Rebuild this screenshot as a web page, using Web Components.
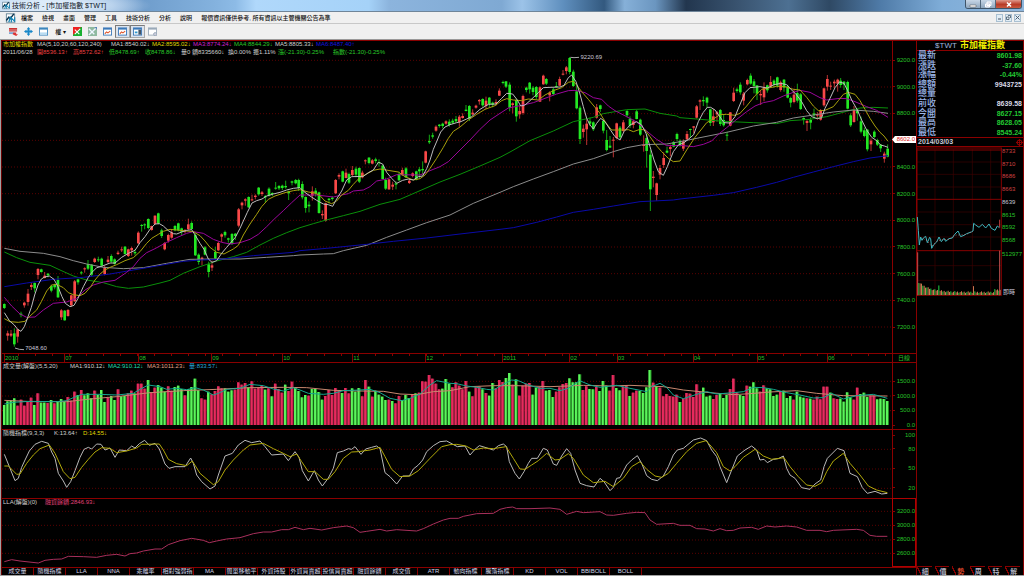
<!DOCTYPE html>
<html lang="zh-Hant">
<head>
<meta charset="utf-8">
<title>技術分析 - [市加權指數 $TWT]</title>
<style>
  html, body { margin: 0; background: #000; }
  body { font-family: "Liberation Sans", "Noto Sans CJK TC", sans-serif; }
</style>
</head>
<body>
<trading-app></trading-app>
<script>
const define = (name, css, html, setup) => {
  customElements.define(name, class extends HTMLElement {
    connectedCallback() {
      if (this.shadowRoot) return;
      const root = this.attachShadow({ mode: "open" });
      const body = typeof html === "function" ? html(this) : html;
      root.innerHTML = `<style>*{box-sizing:border-box}${css}</style>${body}`;
      if (setup) setup(this, root);
    }
  });
};

/* ---------- drawing data: each block is [x0, y0, values] in a space of 3 units per pixel ---------- */

const CANDLES = [
 [0, 570, `13 340 342 354 357 g,23 422 430 437 452 r,33 420 431 437 441 r,43 415 430 463 470 g,53 418 418 440 458 r,63 365 371 375 382 g,73 335 338 346 353 r,84 297 311 336 347 r,94 278 285 291 300 r,104 277 279 295 307 g,114 234 237 255 268 r,124 236 238 246 248 g,134 246 257 264 265 r,144 249 251 256 262 g,154 284 288 302 307 g,164 281 284 292 298 g,174 258 270 322 324 g,184 357 361 382 390 r,194 360 362 391 392 g,204 357 360 378 380 r,214 314 316 346 350 r,224 270 274 334 335 r,234 266 268 277 284 g,244 243 247 250 254 g,254 232 235 238 248 r,264 210 222 236 240 g,275 222 224 254 258 g,284 203 206 216 219 r,295 200 208 211 216 g,305 203 206 227 230 g,314 227 232 252 256 r,324 198 209 216 220 r,334 193 198 215 218 g,344 205 208 222 224 g,354 182 188 192 195 r,365 170 178 181 186 r,375 168 170 192 194 g,385 176 178 198 201 r,395 170 174 181 197 r,405 178 186 190 196 g,415 124 128 160 162 r,425 102 105 108 125 g,434 100 103 106 118 g,445 85 87 114 118 g,455 107 108 120 122 r,465 76 77 102 104 r,475 68 70 101 103 g,485 116 121 138 144 g,494 156 159 178 181 r,505 131 135 152 158 r,515 118 127 143 146 r,525 105 108 121 124 g,535 98 100 121 124 g,545 113 115 126 136 g,555 117 121 125 130 r,565 86 103 117 120 r,575 94 99 117 119 g,586 130 135 196 198 g,596 190 194 216 224 g,606 200 203 210 226 r,615 168 172 194 196 g,626 215 223 246 262 g,636 212 226 233 243 r,646 170 186 205 207 g,655 155 159 181 183 r,665 130 133 140 156 r,675 122 126 136 143 g,685 143 145 149 158 g,696 129 132 160 165 g,706 129 131 138 150 g`],
 [600, 360, `116 264 268 317 322 r,126 245 248 256 268 r,136 235 238 242 257 r,146 229 231 262 264 g,156 224 238 241 244 r,166 223 227 231 238 r,176 201 203 223 227 g,186 213 217 222 228 r,196 225 228 232 248 g,207 202 206 227 230 g,217 217 219 222 228 g,227 186 203 206 209 g,237 195 198 205 210 g,247 194 197 204 210 g,257 182 198 202 206 g,266 212 214 220 240 g,276 182 184 188 196 g,287 177 180 190 193 g,296 176 180 204 213 g,307 184 192 232 238 g,317 229 231 264 278 g,327 244 254 259 277 g,337 199 214 227 242 r,347 204 212 221 230 g,357 215 217 279 281 g,367 271 282 286 297 r,377 248 250 302 305 r,387 234 236 240 250 g,397 229 233 237 242 g,407 177 180 220 222 r,417 160 165 170 178 r,428 152 154 185 187 g,438 146 158 174 175 r,447 158 162 188 192 g,457 138 150 165 168 r,468 140 146 164 172 g,478 142 144 185 189 g,487 152 158 172 175 r,496 118 121 124 133 r,507 111 113 129 133 g,517 117 121 131 133 r,527 113 118 123 130 g,537 118 126 129 140 g,548 135 137 177 178 g,557 173 180 206 210 g,567 176 178 208 210 r,578 185 194 200 210 r,588 184 190 194 208 g,597 155 162 181 183 g,607 143 150 165 168 r,618 141 145 172 174 g,628 176 182 189 192 r,638 157 160 168 172 r,649 152 154 179 181 g,658 141 148 154 175 g,668 124 147 151 164 g,677 92 94 128 130 r,688 44 63 67 72 g,698 38 46 50 56 g,708 16 20 32 35 r,718 12 14 18 23 g,728 8 11 18 25 g,738 1 4 11 14 r,748 -2 5 15 20 g,758 -4 2 8 12 g,768 -12 -3 4 8 g,778 -15 -10 6 20 r`],
 [1380, 150, `8 190 198 204 206 r,18 165 179 183 184 g,28 165 168 206 213 g,38 178 188 193 195 r,48 164 167 173 176 r,58 147 150 154 164 r,68 145 147 166 170 g,78 140 152 168 177 r,88 141 143 162 172 g,98 155 158 164 172 g,108 148 156 160 167 r,118 115 122 137 138 r,129 92 96 99 103 g,138 93 94 110 114 g,149 97 104 173 184 g,158 157 160 165 190 r,169 146 150 199 215 g,179 168 183 193 206 r,189 134 138 189 194 r,199 110 113 120 127 g,209 96 98 118 131 g,219 108 113 126 136 g,229 108 111 141 147 g,240 109 112 155 156 r,250 74 77 103 104 r,259 84 87 101 105 g,269 124 128 136 154 r,280 113 118 132 136 g,289 96 108 111 113 g,299 80 87 107 108 r,309 60 71 74 76 r,319 48 52 63 73 r,329 21 24 66 73 g,340 59 65 108 111 g,350 106 124 175 178 g,360 167 173 267 282 g,370 224 236 246 263 r,380 208 221 238 285 r,390 203 214 221 228 g,400 214 217 238 243 g,410 162 172 203 206 r,421 164 166 177 186 g,430 208 213 242 250 g,440 240 270 300 304 g,450 258 287 293 294 g,460 261 269 272 322 r,470 218 220 264 268 r,480 228 233 262 267 g,490 210 217 243 247 r,501 180 183 196 202 g,510 199 206 227 234 g,520 209 214 225 235 r,530 180 184 207 208 g,541 206 209 254 258 g,551 256 285 288 305 r,560 253 264 303 353 g,571 300 314 418 483 g,580 363 380 384 412 r,590 398 400 435 452 r,600 345 354 374 388 r,611 307 324 345 354 r,621 290 302 308 310 g,631 284 291 297 319 r,641 273 276 290 292 g,651 248 252 267 273 g`],
 [2040, 150, `0 268 272 286 290 g,10 268 274 296 303 r,21 243 252 268 270 r,31 236 237 240 264 g,41 228 229 233 250 r,50 165 169 203 206 r,60 148 151 155 180 r,70 139 150 154 168 g,81 140 143 158 174 g,91 176 178 219 228 g,100 177 199 217 228 r,111 183 187 193 215 r,121 177 180 222 228 g,131 194 210 226 230 g,141 245 254 257 273 g,151 186 187 227 229 r,161 113 128 153 156 r,171 113 118 123 128 g,181 97 104 127 134 g,191 126 131 152 166 r,202 86 90 103 106 r,212 70 77 101 104 g,222 87 94 108 130 g,231 105 106 131 150 g,242 120 132 136 165 r,252 97 112 142 154 r,262 104 106 121 128 g,272 78 96 110 112 r,282 88 92 104 113 g,292 80 82 107 113 g,302 92 97 120 125 r,312 87 89 113 125 g,323 104 109 143 145 g,332 140 144 158 172 g,342 116 134 156 160 r,352 101 129 152 158 g,362 129 133 177 180 g,371 202 204 210 224 g,381 207 213 219 243 r,392 202 210 218 238 g,402 176 190 196 205 g,412 186 193 197 209 r,422 177 180 209 212 r,432 113 115 166 170 r,442 75 87 110 122 r,452 95 107 110 120 r,463 89 95 100 114 r,473 86 89 101 125 r,482 84 92 105 113 g,492 93 95 104 120 g,503 92 96 176 178 g,512 190 196 226 231 g,522 168 180 216 218 r,532 176 179 190 212 g,543 200 214 245 250 g,553 233 241 258 262 g,562 237 239 298 304 g,573 265 272 283 303 r,583 241 245 261 264 g,592 266 270 284 288 g,602 282 284 295 306 g,613 305 311 326 338 r,623 283 296 320 322 g`]
];

const PRICE_LINES = [
 ["#0a8f0a", [[0,570,"13,186 50,203 90,217 150,226 180,240 220,258 260,270 310,278 350,290 385,295 430,291 480,279 510,271 550,250 600,230 650,213 700,200 740,187 780,165 820,145 860,128 900,113"],[600,360,"340,311 375,301 430,287 480,274 540,253 600,238 660,212 720,186 780,163 840,138 900,112"],[1380,150,"150,306 210,272 280,243 340,215 400,202 430,191 500,179 555,177 600,190 650,198"],[2040,150,"0,203 50,207 130,214 220,218 290,221 330,212 390,208 440,200 500,184 540,174 580,172 624,174"]]],
 ["#8c8c8c", [[0,570,"13,175 60,184 130,190 180,200 220,212 260,222 310,232 370,236 430,233 500,220 570,208 640,207 720,207 800,202 880,197"],[600,360,"300,405 370,402 400,401 430,392 500,376 560,352 620,330 680,308 750,285 820,250 900,217"],[1380,150,"160,410 220,387 280,365 340,342 400,326 460,305 500,293 550,284 620,282"],[2040,150,"0,275 60,263 140,247 220,228 290,217 340,204 400,195 460,186 520,180 580,184 624,190"]]],
 ["#0a0aa8", [[0,570,"13,290 80,279 160,268 250,262 330,252 400,240 470,228 550,214 600,210 660,208 760,197 880,187"],[600,360,"300,392 380,385 500,373 580,364 680,354 780,342 900,328"],[1380,150,"160,533 230,517 290,501 340,487 400,478 460,468 540,455 640,450"],[2040,150,"0,447 100,436 160,428 230,412 290,397 340,382 400,366 460,350 520,335 570,324 624,317"]]],
 ["#9a069a", [[0,570,"13,322 35,348 60,372 80,382 105,381 130,360 160,340 200,336 230,325 255,300 280,285 310,276 345,271 380,247 400,230 420,205 440,188 465,176 500,157 530,143 560,130 580,125 610,130 640,148 665,157 690,162 720,158 750,148 775,133 800,110 825,85 850,62 875,38 900,15"],[600,360,"320,225 350,225 400,231 425,225 445,221 460,213 490,210 510,200 530,183 560,177 590,164 660,165 690,152 720,140 745,125"],[1380,150,"0,300 30,270 60,238 90,210 120,190 145,174 185,166 220,158 255,145 290,132 325,122 345,121 375,128 400,143 425,148 445,168 465,182 500,200 530,216 560,243 590,268 620,287"],[2040,150,"0,286 40,290 70,283 95,273 115,253 140,233 165,212 200,185 225,168 250,158 280,152 310,138 340,127 360,121 390,127 420,143 440,150 480,145 500,146 525,155 560,170 590,181 605,190 624,202"]]],
 ["#a8a00c", [[0,570,"13,386 30,395 55,397 75,394 90,378 110,360 124,335 140,303 155,285 170,283 190,293 205,308 220,314 240,317 255,310 272,290 285,270 300,252 315,240 330,232 350,224 375,212 400,203 420,185 440,160 455,145 475,133 490,124 510,118 530,120 560,123 580,125 600,137 615,153 630,172 650,187 672,192"],[600,360,"100,387 115,376 130,345 150,312 170,283 185,260 205,238 225,228 255,218 280,212 300,209 325,216 345,219 360,227 375,243 395,251 410,243 425,225 445,211 460,193 480,172 500,162 520,151 540,147 570,152 595,156 615,170 640,180 660,176 675,165 690,145 710,115 730,82 745,55 760,34"],[1380,150,"0,231 25,210 50,193 75,178 105,167 125,152 140,146 160,150 185,152 205,147 235,150 255,135 280,122 305,113 325,97 340,94 350,105 365,125 385,148 405,172 420,190 440,222 455,240 490,240 505,239 520,245 540,238 555,240 570,260 585,282 605,305 625,325 640,335"],[2040,150,"0,333 20,300 45,262 65,237 80,218 100,207 120,194 140,193 165,196 180,190 200,168 225,137 245,118 265,114 290,109 315,110 340,118 360,120 380,142 400,168 415,182 435,181 460,170 475,152 490,133 505,127 525,133 540,152 555,178 570,205 585,228 600,247 612,258 624,274"]]],
 ["#bdbdbd", [[0,570,"13,368 28,392 43,405 53,418 63,424 73,410 84,380 94,352 104,315 114,285 124,267 134,261 148,258 162,268 174,290 186,320 196,340 210,350 222,346 234,325 250,290 265,262 275,248 290,233 305,229 330,219 345,219 365,202 385,190 405,181 420,158 435,140 450,118 465,102 478,101 490,108 505,122 520,131 530,132 545,126 560,121 575,119 586,136 600,160 612,178 625,207 636,217 650,212 665,190 680,172"],[600,360,"106,352 120,325 130,303 142,277 156,249 170,242 186,237 200,228 220,222 240,217 260,210 280,205 300,203 312,215 330,228 350,241 370,252 385,254 398,259 408,240 425,213 440,180 455,170 490,169 505,158 520,150 535,127 548,132 560,157 575,175 590,190 608,181 625,177 640,180 655,170 668,168 680,146 690,120 700,88 712,60 722,36 735,21 750,14 770,8"],[1380,150,"0,216 20,207 35,200 60,178 85,163 108,162 125,145 140,130 158,132 172,150 182,168 195,165 210,152 235,128 250,113 270,112 300,111 312,106 325,83 335,75 348,95 358,125 370,170 380,205 390,225 400,237 410,220 422,205 435,215 450,238 465,260 480,270 492,245 510,225 530,215 545,225 558,250 570,290 582,330 595,365 610,376 622,350 640,305 655,285"],[2040,150,"12,278 25,268 41,254 55,215 70,187 82,172 92,172 105,180 118,198 132,218 150,219 165,200 178,168 195,128 210,113 240,110 262,114 282,104 302,100 320,104 335,120 350,135 365,155 380,182 395,200 412,206 425,203 435,175 450,145 465,113 478,96 492,100 503,122 515,150 532,180 545,210 560,240 575,262 590,272 602,285 613,288 624,292"]]]
];

const VOLUME = "g165 g154 g151 g145 r167 r149 r167 r153 r143 g165 r130 g158 g158 r159 g150 r160 g153 g147 g155 r141 r152 r125 g135 r120 g136 g130 g145 r122 g135 g120 g156 r144 g138 g150 r118 g139 g138 r130 r122 g130 r101 r101 r116 g90 r126 r113 g105 g113 g125 r109 r122 g111 g107 g117 r136 g117 g111 g86 g121 r145 r149 g125 r133 r123 r109 r115 g115 g125 g121 r119 r97 r104 r99 g112 r94 r116 r113 r107 g119 r115 g139 r101 r117 r128 g104 r123 r95 g113 g123 g142 g135 r137 g117 g117 g126 g149 r138 r120 r135 r114 r122 g129 r114 r130 g115 g125 g114 r139 r90 g110 r140 g122 g134 g140 g150 r149 g153 r160 r138 g150 g135 g144 r133 g130 r128 r94 r95 r75 r86 r101 r118 g116 g87 g101 r112 r97 r107 r118 r93 g125 r139 r112 r110 g118 r129 g137 g99 r115 r90 r96 g84 g69 r104 g88 r137 r107 r101 r99 g134 g113 r111 r93 g122 g120 g141 r125 r112 r102 r99 g85 g97 g97 g73 r120 r109 g117 g118 r111 g123 g93 g107 r122 r75 g114 g121 r110 r105 g138 r128 r122 g123 g129 g112 g60 r98 g108 r113 r139 r132 r138 r140 r134 g156 r146 r129 r131 r141 r103 r125 g113 g140 g137 r147 r135 g131 g144 g135 r117 r86 r127 g135 g138 r107 g110 g97 g115 r125 r106 g115 g118 g138 g134 r126 g122 g144 g138 r149 g125 g140 g143 r145 g146 r149 r140 r148 r110 r110 g128 r145 r147 g146 g155 g127 g142 r149 r113 g132 g128 g141 r137 r137 g148 g146 g147 g153";

const VOLUME_LINES = [
 ["#c98870", [[0,1050,"13,151 100,155 200,155 280,146 350,140 450,128 550,122 650,118 750,113 850,112 920,113 1000,121 1080,123 1150,124 1200,132 1250,134 1300,125"],[1350,1050,"0,122 60,110 130,107 200,107 300,110 400,106 480,108 540,106 640,110 700,120 780,128 850,134 900,131 960,126 1040,122 1100,130 1180,137 1312,138"]]],
 ["#14a890", [[0,1050,"13,162 40,157 90,154 170,155 200,152 220,143 245,133 300,133 350,135 400,130 420,118 445,105 480,110 500,118 530,115 560,119 586,113 610,120 640,135 655,130 680,118 720,115 750,103 790,107 820,117 850,123 880,113 900,120 925,130 970,133 1000,130 1030,122 1080,120 1110,118 1140,128 1170,145 1205,152 1230,145 1260,132 1290,105 1310,92 1350,100"],[1350,1050,"20,101 50,108 80,112 110,118 130,120 160,103 185,90 205,92 235,105 270,115 300,115 330,122 355,115 389,92 420,105 450,112 500,106 540,115 590,125 605,110 630,100 650,112 670,135 700,146 740,133 770,125 800,132 850,128 880,125 910,112 940,113 970,118 1010,128 1050,135 1090,144 1120,143 1145,130 1180,147 1220,137 1270,133 1312,145"]]]
];

const KD_LINES = [
 ["#b8b8b8", [[0,1050,"13,313 28,350 45,392 55,385 65,352 75,330 88,303 105,283 125,274 145,280 155,306 165,325 175,370 190,393 200,412 212,395 225,362 240,322 252,298 265,292 275,297 290,282 303,283 315,300 330,294 345,322 358,300 380,302 395,288 405,294 418,281 434,271 448,286 465,280 478,297 495,342 507,355 525,350 555,350 572,324 580,340 590,375 605,395 630,417 645,408 655,375 675,318 697,310 715,285 735,271 755,278 780,273 795,290 815,315 850,312 865,332 885,305 897,322 907,362 925,393 943,362 955,390 967,408 985,384 1000,355 1012,308 1030,303 1045,296 1055,298 1065,290 1083,313 1097,297 1115,292 1130,288 1140,296 1155,368 1170,380 1190,402 1208,378 1228,378 1240,357 1255,345 1268,330 1280,305 1300,287 1320,275 1340,273"],[1350,1050,"22,290 45,288 60,315 75,298 88,287 105,292 130,300 145,287 160,282 170,290 178,335 195,370 208,387 222,365 235,340 245,325 262,325 280,295 292,300 310,342 320,346 335,318 350,296 362,310 375,360 390,400 410,407 432,411 450,385 462,395 480,422 490,412 500,385 510,383 530,345 545,330 562,317 575,340 590,377 605,388 622,392 640,378 655,350 670,315 682,300 700,295 730,270 752,264 770,272 785,300 800,320 810,350 830,398 845,360 862,318 885,300 905,288 920,300 930,330 942,328 952,338 970,328 985,326 1000,318 1010,355 1020,375 1035,385 1055,413 1080,418 1095,402 1112,390 1122,350 1132,325 1145,312 1162,295 1182,302 1200,370 1222,380 1237,413 1252,430 1275,424 1295,432 1312,430"]]],
 ["#b0a80a", [[0,1050,"13,348 25,348 50,373 60,372 80,340 100,315 120,296 148,285 165,310 190,365 210,386 225,382 245,352 265,328 285,306 305,293 330,295 350,308 380,303 410,294 425,283 478,282 490,300 505,328 530,341 560,347 577,333 600,370 640,404 655,395 675,360 700,330 730,300 750,285 790,280 820,296 850,310 870,320 890,312 905,335 925,365 945,365 970,388 985,388 1005,365 1030,325 1055,306 1075,305 1110,300 1140,292 1155,320 1175,358 1200,380 1230,378 1255,362 1290,325 1325,290 1350,284"],[1350,1050,"20,283 48,288 70,300 100,294 130,296 168,290 190,325 210,357 225,358 245,345 265,332 290,310 315,330 330,328 355,311 370,325 400,375 430,398 465,394 490,410 520,385 545,350 570,335 590,358 615,378 635,382 655,370 680,340 710,305 740,280 768,272 780,285 800,308 820,350 840,363 855,350 880,322 915,298 940,318 965,328 1002,323 1020,350 1045,380 1070,405 1095,409 1115,398 1130,365 1150,333 1180,310 1200,340 1230,375 1255,408 1280,420 1312,428"]]]
];

const MARGIN_LINES = [
 ["#a8305c", [[0,1050,"13,635 35,629 60,633 115,639 135,631 160,628 185,627 205,619 250,620 290,622 320,616 350,613 375,618 390,611 410,609 430,603 465,597 485,597 505,584 540,572 575,565 610,571 628,578 650,573 680,567 720,563 760,551 790,546 815,546 845,539 865,539 885,532 910,539 930,535 965,540 1000,533 1040,528 1060,533 1080,547 1100,544 1140,538 1160,543 1190,539 1250,543 1270,536 1300,522 1330,510 1350,505"],[1350,1050,"25,505 40,499 80,491 130,490 150,478 170,473 188,471 200,476 240,476 300,474 330,478 350,493 380,484 400,488 450,485 470,495 490,496 530,490 560,487 585,488 600,510 620,523 670,520 690,526 720,526 740,536 765,537 790,543 810,536 830,542 850,541 870,534 905,532 925,538 950,528 975,531 1010,528 1040,531 1070,541 1110,541 1130,545 1150,541 1220,538 1240,541 1260,556 1280,559 1312,559"]]]
];

/* ---------- drawing helpers ---------- */

const polyline = ([color, blocks]) => {
  const pts = blocks.flatMap(([x0, y0, s]) => s.split(" ").map(p => {
    const [x, y] = p.split(",").map(Number);
    return `${x + x0},${y + y0}`;
  }));
  return `<polyline points="${pts.join(" ")}" fill="none" stroke="${color}" stroke-width="1" vector-effect="non-scaling-stroke"/>`;
};
const gridLines = ys => ys.map(y =>
  `<line x1="6" x2="2676" y1="${y}" y2="${y}" stroke="#5a0000" stroke-width="1" stroke-dasharray="1 2" vector-effect="non-scaling-stroke"/>`).join("");
const candles = () => CANDLES.flatMap(([x0, y0, s]) => s.split(",").map(c => {
  const p = c.split(" "), [x, hi, top, bot, lo] = p.slice(0, 5).map(Number);
  const [wick, body] = p[5] === "g" ? ["#12a812", "#22e822"] : ["#b83030", "#f84848"];
  return `<rect x="${x + x0 - 1.5}" y="${hi + y0}" width="3" height="${lo - hi}" fill="${wick}"/>` +
         `<rect x="${x + x0 - 4}" y="${top + y0}" width="8" height="${Math.max(3, bot - top)}" fill="${body}"/>`;
})).join("");
const volumeBars = () => {
  const list = VOLUME.split(" "), pitch = (2662 - 13) / (list.length - 1);
  return list.map((v, i) => {
    const x = 13 + i * pitch, y = 1050 + Number(v.slice(1)), h = 1275 - y;
    const [light, dark] = v[0] === "g" ? ["#5cf55c", "#1f8a1f"] : ["#e82a5e", "#92203c"];
    return `<rect x="${x - 4}" y="${y}" width="9" height="${h}" fill="${dark}"/><rect x="${x - 4}" y="${y}" width="6" height="${h}" fill="${light}"/>`;
  }).join("");
};
const mainGrid = Array.from({ length: 11 }, (_, i) => 181 + i * 80);

const DRAWINGS = {
  price: { box: "6 120 2670 939", art: () => gridLines(mainGrid) + candles() + PRICE_LINES.map(polyline).join("") +
    `<path d="M1711 172 L1722 173 L1737 172 M45 1044 L58 1048 L72 1049" fill="none" stroke="#aaa" stroke-width="1" vector-effect="non-scaling-stroke"/>` },
  volume: { box: "6 1086 2670 201", art: () => gridLines([1144, 1188, 1232]) + volumeBars() + VOLUME_LINES.map(polyline).join("") },
  kd: { box: "6 1287 2670 207", art: () => gridLines([1348, 1407, 1465]) + KD_LINES.map(polyline).join("") },
  margin: { box: "6 1494 2670 207", art: () => gridLines([1534, 1576, 1620, 1660]) + MARGIN_LINES.map(polyline).join("") }
};

/* ---------- window chrome ---------- */

const LOGO = `<svg class="logo" viewBox="0 0 12 12" aria-hidden="true"><rect x="1" y="1" width="10" height="10" fill="#fff" stroke="#5b7c90"/><path d="M1 9 4 5 5.500 7 10 1" fill="none" stroke="#0a3550" stroke-width="1.800"/><path d="M4 11 6 4M7 11V6l4 4V5" fill="none" stroke="#1785b5" stroke-width="1.500"/></svg>`;

define("title-bar", `
  :host{display:flex;align-items:flex-start;height:12px;padding-left:2px;overflow:hidden;color:#101828;font-size:7px;
    background:radial-gradient(ellipse 100px 16px at 5% 50%,#dcebfa 30%,#dcebfa00),
      linear-gradient(90deg,#b5d0ec 0,#8fb4dc 11%,#6f9dcc 14%,#84b2de 21%,#8dbbe6 23%,#b0d8fb 25%,#a5d2f8 36%,#8cb4dd 38%,#7fa9d3 49%,#9cc3e8 51%,#5f8fbe 55%,#33597f 59%,#86b0d8 61%,#6b96c0 64%,#22364e 67%,#39536f 72%,#4d7092 77%,#2f4964 81%,#4f7ba8 86%,#7fadd8 92%,#8fb6dc 100%);border-bottom:1px solid #6f8599}
  .logo{width:8px;height:9px;margin:1px 2px 0 0}
  h1{margin:0;font-size:7px;line-height:11px;font-weight:400;flex:1;white-space:nowrap}
  .ctl{display:flex;margin-right:2px;height:9px;border:1px solid #3f5468;border-top:0;border-radius:0 0 3px 3px;overflow:hidden}
  button{border:0;padding:0;width:15px;display:grid;place-items:center;background:linear-gradient(#c7d6e6,#8fa6bd);border-right:1px solid #52677c}
  button:last-child{width:25px;border:0;background:linear-gradient(#e0998c,#b83a26 55%,#c75a40)}
  button svg{width:8px;height:7px}`,
  `${LOGO}<h1>技術分析 - [市加權指數 $TWT]</h1>
  <div class="ctl">
   <button aria-label="最小化"><svg viewBox="0 0 8 7"><path d="M1 4h6v2H1z" fill="#fff" stroke="#555" stroke-width=".5"/></svg></button>
   <button aria-label="還原"><svg viewBox="0 0 8 7"><path d="M3 1h4v3.500H3zM1.500 3h4v3h-4z" fill="#ccd" stroke="#fff"/></svg></button>
   <button aria-label="關閉"><svg viewBox="0 0 8 7"><path d="M2 1.500 6 5.500M6 1.500 2 5.500" stroke="#fff" stroke-width="1.500"/></svg></button>
  </div>`);

define("menu-bar", `
  :host{display:flex;align-items:center;height:12px;padding-left:5px;background:#f0f0f0;border-bottom:1px solid #c8c8c8;color:#111}
  .logo{width:11px;height:10px;margin-right:5px}
  nav{display:flex;gap:9px;flex:1;white-space:nowrap}
  a,p{margin:0;color:inherit;text-decoration:none;font-size:6px;line-height:10px;font-weight:500}
  .mdi{display:flex;gap:2px;margin-right:3px}
  button{width:7px;height:8px;padding:0;border:1px solid #a9c0d2;background:#e2edf5;display:grid;place-items:center}
  button svg{width:5px;height:5px}`,
  `${LOGO}<nav>${["檔案","檢視","畫面","管理","工具","技術分析","分析","說明"].map(t => `<a href="#">${t}</a>`).join("")}
   <p>報價資訊僅供參考, 所有資訊以主管機關公告為準</p></nav>
   <div class="mdi">
   <button aria-label="最小化視窗"><svg viewBox="0 0 5 5"><path d="M1 4h3" stroke="#456"/></svg></button>
   <button aria-label="還原視窗"><svg viewBox="0 0 5 5"><path d="M2 .5h2.500V3M.5 2h2.500v2.500H.5z" fill="none" stroke="#456" stroke-width=".8"/></svg></button>
   <button aria-label="關閉視窗"><svg viewBox="0 0 5 5"><path d="M.5.5 4.500 4.500M4.500.5.5 4.500" stroke="#456" stroke-width=".9"/></svg></button></div>`);

const WINDOW = (frame, inner) => `<rect x=".5" y="1" width="9" height="8" fill="#fff" stroke="${frame}"/><path d="M1 2h8" stroke="${frame}" stroke-width="1.800"/>${inner}`;
const TREND = `<path d="M2 7.500 4 5.500l1.500 1L8 4.500" stroke="#e05a30" stroke-width="1.200" fill="none"/>`;
const TOOLS = [
  ["刪除", `<path d="M0 1h9v2H0zM0 3.500h9v1.500H0z" fill="#c33"/><path d="M0 6h6v1.500H0z" fill="#5a8fc8"/><path d="M5 6h3v2h2L8 10 4 8z" fill="#d33"/>`],
  ["移動", `<path d="M5 0 7 2.500H6V4h1.500V3L10 5 7.500 7V6H6v1.500h1L5 10 3 7.500h1V6H2.500v1L0 5l2.500-2v1H4V2.500H3z" fill="#1787c8"/>`],
  ["視窗", WINDOW("#3c86bd", `<path d="M1 6h8v2.500H1z" fill="#b9dcf2"/>`)],
  ["權值", null],
  ["紅綠", `<path d="M0 0h10v10H0z" fill="#18b030"/><path d="M0 0h9L0 9z" fill="#e22"/><path d="M2 8 8 2M2 3l5 5" stroke="#fff" stroke-width="1.200"/>`],
  ["比較", `<path d="M0 0h10v10H0z" fill="#8fb9a0"/><path d="M1 9 9 1M1 2l6 6" stroke="#eef5ff" stroke-width="1.500"/><path d="M7 0h3v3z" fill="#5b87b8"/>`],
  ["走勢", WINDOW("#3b78b8", TREND)],
  ["技術線圖", WINDOW("#3b78b8", TREND), 1],
  ["報價列", WINDOW("#3b78b8", `<path d="M2 6h3" stroke="#39c" stroke-width="2"/><path d="M6 3h3v5.500H6z" fill="#456"/>`), 1],
  ["設定", WINDOW("#9aa9b8", `<circle cx="8" cy="8" r="1.800" fill="#ccd" stroke="#9aa9b8"/>`)]
];
define("tool-bar", `
  :host{display:flex;align-items:center;height:16px;padding-left:6px;background:#f0f0f0;border-bottom:1px solid #999}
  button{width:15px;height:13px;padding:0;border:1px solid transparent;background:none;display:flex;align-items:center;justify-content:center;font:500 6px "Liberation Sans","Noto Sans CJK TC",sans-serif;color:#111;white-space:nowrap}
  button.wide{width:19px} .on{border-color:#7a7a7a #aaa #aaa #7a7a7a;background:#dbe3ee}
  svg{width:9px;height:9px}`,
  TOOLS.map(([label, art, on]) => art
    ? `<button aria-label="${label}" class="${on ? "on" : ""}"><svg viewBox="0 0 10 10">${art}</svg></button>`
    : `<button class="wide">權 ▾</button>`).join(""));

/* ---------- chart parts ---------- */

define("chart-panel", `
  :host{display:grid;grid-template-columns:minmax(0,1fr) 24px;min-height:0;position:relative;overflow:hidden}
  .plot{display:grid;grid-template:minmax(0,1fr)/minmax(0,1fr);min-height:0;position:relative;box-shadow:inset 0 1px #8a0000}
  svg,.head{grid-area:1/1}
  svg{width:100%;height:100%;display:block;min-height:0}
  .head{z-index:1;align-self:start;padding:0 1px}`,
  host => { const d = DRAWINGS[host.getAttribute("kind")];
    return `<div class="plot"><svg viewBox="${d.box}" preserveAspectRatio="none" aria-hidden="true">${d.art()}</svg><div class="head"><slot></slot></div><slot name="callout"></slot></div><slot name="axis"></slot>`; });

define("legend-row", `
  :host{display:grid;font-size:6px;line-height:8px;white-space:nowrap;color:#d0d0d0;justify-content:start}`,
  `<slot></slot>`,
  host => { host.style.gridTemplateColumns = host.getAttribute("cols"); });

define("value-axis", `
  :host{display:flex;flex-direction:column;min-height:0;box-shadow:inset 1px 1px #8a0000;color:#28c028;font-size:6px;line-height:8px}
  :host([framed]){box-shadow:inset 0 0 0 1px #b00000}
  span{display:flex;align-items:center;justify-content:flex-end;padding-right:1px;position:relative}
  span::before{content:"";width:3px;height:1px;background:#8a0000;margin-right:auto}
  i{min-height:0}
  .now{background:#fff;color:#e01818;height:7px;line-height:7px;margin-bottom:1px;clip-path:polygon(0 50%,3px 0,100% 0,100% 100%,3px 100%)}
  .now::before{background:none}`,
  host => host.getAttribute("labels").split(",").map((t, i) => {
    const gap = (host.getAttribute("gaps") || "").split(",")[i - 1] || 1;
    return (i ? `<i style="flex:${gap}"></i>` : "") + `<span class="${t === host.getAttribute("now") ? "now" : ""}">${t}</span>`;
  }).join(""));

define("time-axis", `
  :host{display:grid;grid-template-columns:minmax(0,1fr) 24px;height:9px;border-top:1px solid #8a0000;color:#28c028;font-size:6px;line-height:8px}
  ol{display:flex;margin:0;padding:0 0 0 2px;list-style:none;background:repeating-linear-gradient(90deg,#0000 0 16px,#8a0000 16px 17px) 0 0/100% 2px no-repeat}
  li{min-width:0;border-left:1px solid #8a0000;overflow:visible}
  b{font-weight:400;border-left:1px solid #8a0000;padding-left:5px}`,
  `<ol>${[["2010",60],["07",74],["08",73],["09",71],["10",70],["11",73],["12",77],["2011",67],["02",47],["03",76],["04",64],["05",70],["06",65]]
    .map(([t, w]) => `<li style="flex:${w} 1 0">${t}</li>`).join("")}</ol><b>日線</b>`);

define("tab-strip", `
  :host{display:flex;height:8px;border-top:1px solid #8a0000;font-size:6px;line-height:7px}
  button{width:32px;height:7px;padding:0;border:0;border-right:1px solid #8a0000;background:none;color:#d0d4e8;font:inherit;white-space:nowrap;overflow:hidden;display:flex;justify-content:center}`,
  ["成交量","隨機指標","LLA","NNA","乖離率","相對強弱指","MA","簡單移動平","外資持股","外資買賣超","投信買賣超","融資餘額","成交值","ATR","動向指標","騰落指標","KD","VOL","BBIBOLL","BOLL"]
    .map(t => `<button>${t}</button>`).join(""));

/* ---------- quote side panel ---------- */

const intraday = () => {
  let s = `<path d="M153 337V776M208 337V776M265 337V776M320 337V776M98 375H352M98 412H352M98 450H352M98 525H352M98 563H352M98 600H352M98 686H352M98 730H352" stroke="#3c0000" stroke-width="2"/>`;
  s += `<path d="M98 333H354M98 339H354M98 487H354M98 641H354M98 775H352M352 333V776M99 333V776" stroke="#860000" stroke-width="3" fill="none"/>`;
  for (let i = 0; i < 62; i++) {
    const x = 103 + i * 4, h = 6 + 30 * Math.exp(-i / 8) + (i * 7 % 5) * 1.2 + (i > 56 ? 7 : 0) + (i === 15 || i === 41 ? 18 : 0);
    s += `<rect x="${x}" y="${774 - h}" width="3" height="${h}" fill="${i % 3 ? "#c87850" : "#20d040"}"/>`;
  }
  s += `<path d="M101 646V775M347 641V775" stroke="#c05050" stroke-width="3"/>`;
  s += `<polyline points="100,540 103,580 106,624 110,600 114,610 118,603 125,598 130,617 137,601 140,605 143,634 150,622 158,615 165,600 172,614 180,604 185,613 195,605 205,603 212,592 222,582 230,599 240,595 248,590 262,585 267,582 269,559 275,564 285,571 295,562 305,573 315,561 322,574 333,580 340,567 346,572" fill="none" stroke="#3fb8c0" stroke-width="3"/>`;
  s += `<polyline points="118,605 130,612 143,628 158,613 172,608 195,607 212,594 230,594 248,592 267,582" fill="none" stroke="#c07070" stroke-width="2" stroke-dasharray="4 5"/><path d="M347 572V548" stroke="#c04040" stroke-width="3"/>`;
  return s;
};

define("intraday-chart", `
  :host{display:grid;grid-template-columns:86px minmax(0,1fr);height:150px;font-size:6px;line-height:8px;color:#28c028}
  svg{width:86px;height:150px}
  .scale{display:flex;flex-direction:column;white-space:nowrap}
  .levels{display:flex;flex-direction:column;justify-content:space-between;height:97px;margin-bottom:6px}
  .up{color:#d04040}.flat,.live{color:#c8c8d8} .live{margin-top:auto;padding:0 0 1px 1px}`,
  `<svg viewBox="96 330 258 450" preserveAspectRatio="none" aria-hidden="true">${intraday()}</svg>
   <div class="scale"><div class="levels">${["8733","8710","8686","8663","8639","8615","8592","8568"].map((v, i) =>
     `<span class="${i < 4 ? "up" : i === 4 ? "flat" : ""}">${v}</span>`).join("")}</div><span>512977</span><span class="live">即時</span></div>`);

define("quote-panel", `
  :host{display:flex;flex-direction:column;border:1px solid #8a0000;border-width:1px 1px 0 1px;color:#c8c8d4}
  h2{display:flex;justify-content:center;align-items:center;gap:3px;margin:0;height:10px;font-size:8px;line-height:9px;font-weight:400;color:#9fb4dc;border-bottom:1px solid #8a0000;white-space:nowrap}
  h2 b{color:#f0f000;font-size:9px}
  table{border-collapse:collapse;width:100%;height:86px}
  th,td{padding:0;line-height:9px}
  th{text-align:left;font-size:9px;font-weight:500;color:#9cb6e8;padding-left:1px}
  td{text-align:right;font-size:7px;font-weight:700;color:#22c832;padding-right:1px}
  .w{color:#d8d8e4}
  .date{display:flex;justify-content:space-between;align-items:center;height:10px;border-top:1px solid #8a0000;border-bottom:1px solid #8a0000;font-size:7px;font-weight:700;line-height:8px;padding-left:1px}
  .date svg{width:7px;height:7px}
  intraday-chart{margin-left:-1px}
  .tabs{display:flex;margin-top:auto;height:9px}
  button{flex:1;padding:0;border:0;color:#c0c4d8;background:linear-gradient(#8a0000,#8a0000) 0 0/calc(100% - 3px) 1px no-repeat;font:500 7px/8px "Noto Sans CJK TC",sans-serif;display:flex;align-items:center;justify-content:space-between}
  button::before{content:"";width:4px;height:9px;background:linear-gradient(65deg,#0000 42%,#8a0000 42% 60%,#0000 60%)}
  button::after{content:"";width:5px}
  .sel{color:#f05030;background:none}`,
  `<h2>$TWT <b>市加權指數</b></h2>
   <table>${[["最新","8601.98"],["漲跌","-37.60"],["漲幅","-0.44%"],["總額","9943725","w"],["總量",""],["前收","8639.58","w"],["今開","8627.15"],["最高","8628.05"],["最低","8545.24"]]
     .map(([k, v, c]) => `<tr><th scope="row">${k}</th><td class="${c || ""}">${v}</td></tr>`).join("")}</table>
   <div class="date">2014/03/03<svg viewBox="0 0 7 7" aria-hidden="true"><circle cx="3.500" cy="3.500" r="2.500" fill="none" stroke="#a00000"/><path d="M0 3.500h7M3.500 0v7" stroke="#a00000" stroke-width=".8"/></svg></div>
   <intraday-chart></intraday-chart>
   <div class="tabs">${["細","價","勢","周","特","解"].map((t, i) => `<button class="${i === 2 ? "sel" : ""}">${t}</button>`).join("")}</div>`);

/* ---------- page ---------- */

define("trading-app", `
  :host{display:flex;flex-direction:column;min-height:100vh;background:#000}
  main{flex:1;display:grid;grid-template-columns:minmax(0,1fr) 108px;border:solid #a0a0a0;border-width:0 0 1px 1px}
  .charts{display:flex;flex-direction:column;min-width:0;border-left:1px solid #6a0000}
  .price{flex:313 1 0}.volume{flex:67 1 0}.kd,.margin{flex:69 1 0}
  .price value-axis{padding:16px 0 22px}.volume value-axis{padding:15px 0 0}.kd value-axis{padding:2px 0 6px}.margin value-axis{padding:9px 0 10px}
  .y{color:#e0d800}.m{color:#d020d0}.g{color:#28c828}.b{color:#1414e0}.r{color:#f04040}.t{color:#20dcb0}.s{color:#e0a088}.c{color:#28a8d8}.p{color:#e04078}
  em{font-style:normal;position:absolute;font-size:6px;line-height:8px;color:#c8c8d8}
  .high{left:65%;top:4%}.low{left:2.6%;top:97%}`,
  `<title-bar></title-bar><menu-bar></menu-bar><tool-bar></tool-bar>
  <main><div class="charts">
   <chart-panel class="price" kind="price">
    <legend-row cols="34px 74px repeat(6,41px)"><span class="y">市加權指數</span><span>MA(5,10,20,60,120,240)</span><span>MA1:8540.02↓</span><span class="y">MA2:8595.02↓</span><span class="m">MA3:8774.24↓</span><span class="g">MA4:8844.29↓</span><span>MA5:8805.33↓</span><span class="b">MA6:8487.40↑</span></legend-row>
    <legend-row cols="34px repeat(4,36px) 11px 36px 25px 25px 55px auto"><span>2011/06/28</span><span class="r">開8536.13↑</span><span class="r">高8572.62↑</span><span class="g">低8478.69↑</span><span class="g">收8478.86↓</span><span>量0</span><span>額8335660↓</span><span>換0.00%</span><span>振1.11%</span><span class="g">漲(-21.30)-0.25%</span><span class="g">指數(-21.30)-0.25%</span></legend-row>
    <em slot="callout" class="high">9220.69</em><em slot="callout" class="low">7048.60</em>
    <value-axis slot="axis" now="8602.0" labels="9200.0,9000.0,8800.0,8602.0,8400.0,8200.0,8000.0,7800.0,7600.0,7400.0,7200.0"></value-axis>
   </chart-panel>
   <time-axis></time-axis>
   <chart-panel class="volume" kind="volume">
    <legend-row cols="67px 38px 39px 42px auto"><span>成交量(解盤)(5,5,20)</span><span>MA1:910.12↓</span><span class="t">MA2:910.12↓</span><span class="s">MA3:1011.23↓</span><span class="c">量:833.57↓</span></legend-row>
    <value-axis slot="axis" labels="1500.0,1000.0,500.0,0.0"></value-axis>
   </chart-panel>
   <chart-panel class="kd" kind="kd">
    <legend-row cols="51px 29px auto"><span>隨機指標(9,3,3)</span><span>K:13.64↑</span><span class="y">D:14.55↓</span></legend-row>
    <value-axis slot="axis" labels="100,80,50,20" gaps="1,2,2"></value-axis>
   </chart-panel>
   <chart-panel class="margin" kind="margin">
    <legend-row cols="42px auto"><span>LLA(解盤)(0)</span><span class="p">融資餘額:2846.93↓</span></legend-row>
    <value-axis slot="axis" framed labels="3200.0,3000.0,2800.0,2600.0"></value-axis>
   </chart-panel>
   <tab-strip></tab-strip>
  </div><quote-panel></quote-panel></main>`);
</script>
</body>
</html>
